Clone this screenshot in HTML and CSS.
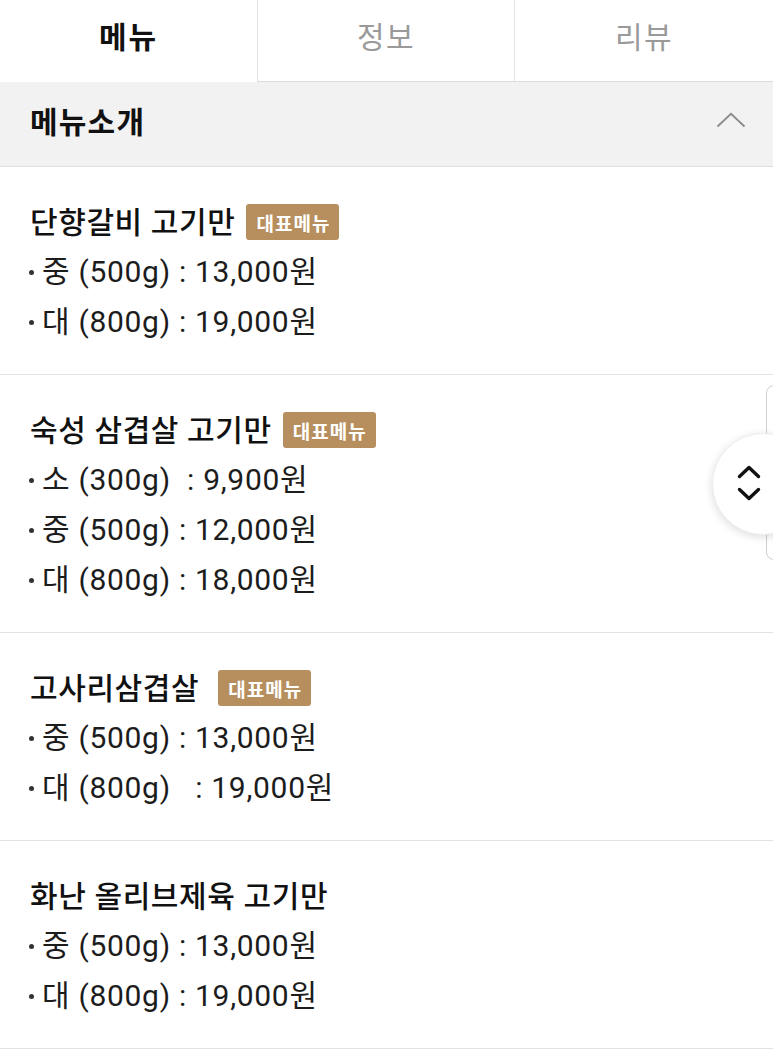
FILE: index.html
```html
<!DOCTYPE html>
<html lang="ko">
<head>
<meta charset="utf-8">
<link rel="stylesheet" href="styles.css">
</head>
<body>
<div class="page">
  <nav class="tabs">
    <div class="tab active">메뉴</div>
    <div class="tab">정보</div>
    <div class="tab">리뷰</div>
  </nav>
  <div class="section-head">
    <span class="section-title">메뉴소개</span>
    <svg class="chev-up" width="30" height="16" viewBox="0 0 30 16"><path d="M1.5 14.5 L15 1.8 L28.5 14.5" fill="none" stroke="#8a8a8a" stroke-width="1.8"/></svg>
  </div>
  <ul class="menu">
    <li class="item">
      <div class="title">단향갈비 고기만<span class="badge">대표메뉴</span></div>
      <div class="price"><span class="dot"></span>중 (500g) : 13,000원</div>
      <div class="price"><span class="dot"></span>대 (800g) : 19,000원</div>
    </li>
    <li class="item">
      <div class="title">숙성 삼겹살 고기만<span class="badge">대표메뉴</span></div>
      <div class="price"><span class="dot"></span>소 (300g)  : 9,900원</div>
      <div class="price"><span class="dot"></span>중 (500g) : 12,000원</div>
      <div class="price"><span class="dot"></span>대 (800g) : 18,000원</div>
    </li>
    <li class="item">
      <div class="title">고사리삼겹살 <span class="badge">대표메뉴</span></div>
      <div class="price"><span class="dot"></span>중 (500g) : 13,000원</div>
      <div class="price"><span class="dot"></span>대 (800g)   : 19,000원</div>
    </li>
    <li class="item">
      <div class="title">화난 올리브제육 고기만</div>
      <div class="price"><span class="dot"></span>중 (500g) : 13,000원</div>
      <div class="price"><span class="dot"></span>대 (800g) : 19,000원</div>
    </li>
  </ul>
  <div class="scroll-track"></div>
  <div class="scroll-btn">
    <svg width="26" height="40" viewBox="0 0 26 40"><path d="M3.5 12.5 L13 3.5 L22.5 12.5 M3.5 25.5 L13 34.5 L22.5 25.5" fill="none" stroke="#111" stroke-width="3.4" stroke-linecap="round" stroke-linejoin="round"/></svg>
  </div>
</div>
</body>
</html>
```

FILE: styles.css
```css
html, body {
  margin: 0;
  padding: 0;
  background: #fff;
}
.page {
  position: relative;
  width: 773px;
  height: 1055px;
  overflow: hidden;
  font-family: Roboto, "Noto Sans CJK KR", sans-serif;
  color: #1c1c1c;
}
.tabs {
  display: grid;
  grid-template-columns: 257px 257px 1fr;
  height: 82px;
}
.tab {
  display: flex;
  align-items: center;
  justify-content: center;
  padding-bottom: 12px;
  box-sizing: border-box;
  font-size: 30px;
  letter-spacing: 1.5px;
  color: #9a9a9a;
  border-left: 1px solid #e2e2e2;
  border-bottom: 1px solid #dcdcdc;
}
.tab.active {
  border-left: none;
  border-bottom: none;
  color: #111;
  font-weight: 700;
  letter-spacing: 2px;
}
.section-head {
  display: flex;
  align-items: center;
  justify-content: space-between;
  height: 84px;
  padding: 0 27px 0 30px;
  background: #f2f2f2;
  border-bottom: 1px solid #dedede;
}
.section-title {
  font-size: 30px;
  letter-spacing: 1.2px;
  font-weight: 700;
  color: #111;
  margin-top: -8px;
}
.chev-up {
  margin-top: -8px;
}
.menu {
  list-style: none;
  margin: 0;
  padding: 0;
}
.item {
  padding: 28px 30px 28px 30px;
  border-bottom: 1px solid #e3e3e3;
}
.title {
  display: flex;
  align-items: center;
  height: 50px;
  font-size: 30px;
  letter-spacing: 0.6px;
  font-weight: 500;
  color: #111;
  white-space: pre;
}
.badge {
  display: inline-flex;
  align-items: center;
  justify-content: center;
  height: 36px;
  padding: 0 9px 0 10px;
  margin-left: 11px;
  margin-top: 4px;
  border-radius: 3px;
  background: #b78f5f;
  color: #fff;
  font-size: 19px;
  letter-spacing: 1px;
  font-weight: 700;
  font-family: "Noto Sans CJK KR", sans-serif;
}
.price {
  display: flex;
  align-items: center;
  height: 50px;
  box-sizing: border-box;
  padding-bottom: 5px;
  font-size: 30px;
  letter-spacing: 0.7px;
  color: #1c1c1c;
  white-space: pre;
}
.dot {
  width: 5px;
  height: 5px;
  border-radius: 50%;
  background: #333;
  margin: 7px 8px 0 -1px;
  flex: none;
}
.item .title + .price {
  margin-top: 1px;
}
.scroll-track {
  position: absolute;
  left: 766px;
  top: 385px;
  width: 20px;
  height: 175px;
  border: 1px solid #cfcfcf;
  border-radius: 8px;
  box-sizing: border-box;
}
.scroll-btn {
  position: absolute;
  left: 712px;
  top: 433px;
  width: 102px;
  height: 102px;
  border-radius: 50%;
  background: #fff;
  box-shadow: 0 2px 8px rgba(0,0,0,0.14);
  border: 1px solid #eeeeee;
  box-sizing: border-box;
  display: flex;
  align-items: center;
  padding-left: 23px;
}
```
